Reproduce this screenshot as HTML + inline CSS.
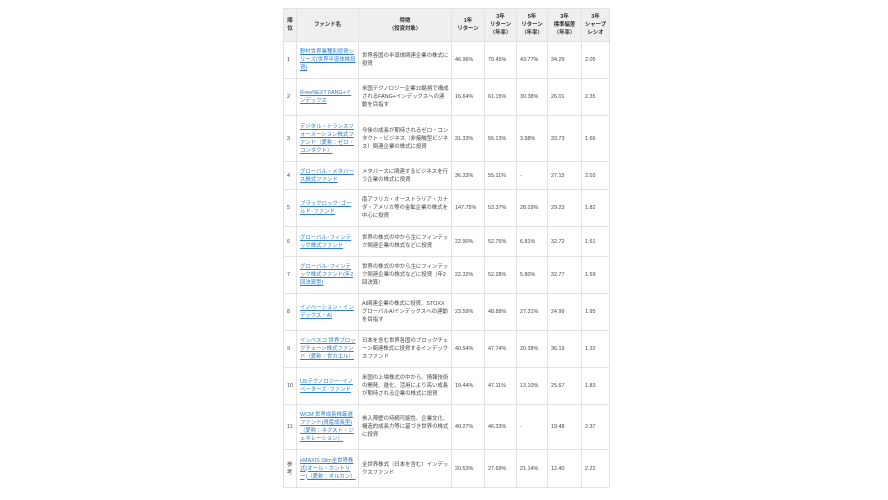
<!DOCTYPE html>
<html><head><meta charset="utf-8"><style>
html,body{margin:0;padding:0;background:#fff;width:888px;height:500px;overflow:hidden}
table{position:absolute;left:283px;top:8px;border-collapse:collapse;table-layout:fixed;font-family:"Liberation Sans","Noto Sans CJK JP",sans-serif;font-size:5.4px;line-height:8px;color:#444}
td,th{border:1px solid #e2e2e2;padding:0 2px 0 3px;vertical-align:middle;text-align:left;overflow:hidden}
th{background:#efefef;font-weight:bold;text-align:center;color:#333;height:32px;padding:0 1px}
a{color:#2a7fd0;text-decoration:underline}
</style></head><body>
<table>
<colgroup><col style="width:13px"><col style="width:62px"><col style="width:93px"><col style="width:33px"><col style="width:32px"><col style="width:31px"><col style="width:34px"><col style="width:28px"></colgroup>
<tr><th>順<br>位</th><th>ファンド名</th><th>特徴<br>（投資対象）</th><th>1年<br>リターン</th><th>3年<br>リターン<br>（年率）</th><th>5年<br>リターン<br>（年率）</th><th>3年<br>標準偏差<br>（年率）</th><th style="white-space:nowrap">3年<br>シャープ<br>レシオ</th></tr>
<tr style="height:37px"><td>1</td><td><a>野村世界業種別投資シリーズ(世界半導体株投資)</a></td><td>世界各国の半導体関連企業の株式に投資</td><td>46.96%</td><td>70.45%</td><td>43.77%</td><td>34.29</td><td>2.05</td></tr>
<tr style="height:37px"><td>2</td><td><a>iFreeNEXT FANG+インデックス</a></td><td>米国テクノロジー企業10銘柄で構成されるFANG+インデックスへの連動を目指す</td><td>16.64%</td><td>61.15%</td><td>30.38%</td><td>26.01</td><td>2.35</td></tr>
<tr style="height:46px"><td>3</td><td><a>デジタル・トランスフォーメーション株式ファンド（愛称：ゼロ・コンタクト）</a></td><td>今後の成長が期待されるゼロ・コンタクト・ビジネス（非接触型ビジネス）関連企業の株式に投資</td><td>31.33%</td><td>56.13%</td><td>3.98%</td><td>33.73</td><td>1.66</td></tr>
<tr style="height:28px"><td>4</td><td><a>グローバル・メタバース株式ファンド</a></td><td>メタバースに関連するビジネスを行う企業の株式に投資</td><td>36.33%</td><td>55.11%</td><td>-</td><td>27.15</td><td>2.03</td></tr>
<tr style="height:37px"><td>5</td><td><a>ブラックロック･ゴールド･ファンド</a></td><td>南アフリカ・オーストラリア・カナダ・アメリカ等の金鉱企業の株式を中心に投資</td><td>147.75%</td><td>53.37%</td><td>28.19%</td><td>29.23</td><td>1.82</td></tr>
<tr style="height:30px"><td>6</td><td><a>グローバル･フィンテック株式ファンド</a></td><td>世界の株式の中から主にフィンテック関連企業の株式などに投資</td><td>22.90%</td><td>52.75%</td><td>6.81%</td><td>32.72</td><td>1.61</td></tr>
<tr style="height:37px"><td>7</td><td><a>グローバル･フィンテック株式ファンド(年2回決算型)</a></td><td>世界の株式の中から主にフィンテック関連企業の株式などに投資（年2回決算）</td><td>22.32%</td><td>52.28%</td><td>5.80%</td><td>32.77</td><td>1.59</td></tr>
<tr style="height:37px"><td>8</td><td><a>イノベーション・インデックス・AI</a></td><td>AI関連企業の株式に投資、STOXXグローバルAIインデックスへの連動を目指す</td><td>23.59%</td><td>48.88%</td><td>27.31%</td><td>24.99</td><td>1.95</td></tr>
<tr style="height:37px"><td>9</td><td><a>インベスコ 世界ブロックチェーン株式ファンド（愛称：世カエル）</a></td><td>日本を含む世界各国のブロックチェーン関連株式に投資するインデックスファンド</td><td>40.54%</td><td>47.74%</td><td>20.38%</td><td>36.19</td><td>1.32</td></tr>
<tr style="height:37px"><td>10</td><td><a>USテクノロジー･イノベーターズ･ファンド</a></td><td>米国の上場株式の中から、情報技術の開発、進化、活用により高い成長が期待される企業の株式に投資</td><td>19.44%</td><td>47.11%</td><td>13.10%</td><td>25.67</td><td>1.83</td></tr>
<tr style="height:45px"><td>11</td><td><a>WCM 世界成長株厳選ファンド(資産成長型)（愛称：ネクスト・ジェネレーション）</a></td><td>参入障壁の持続可能性、企業文化、構造的成長力等に基づき世界の株式に投資</td><td>40.27%</td><td>46.33%</td><td>-</td><td>19.48</td><td>2.37</td></tr>
<tr style="height:38px"><td>参<br>考</td><td><a>eMAXIS Slim全世界株式(オール・カントリー)（愛称：オルカン）</a></td><td>全世界株式（日本を含む）インデックスファンド</td><td>20.53%</td><td>27.69%</td><td>21.14%</td><td>12.40</td><td>2.22</td></tr>
</table>
</body></html>
